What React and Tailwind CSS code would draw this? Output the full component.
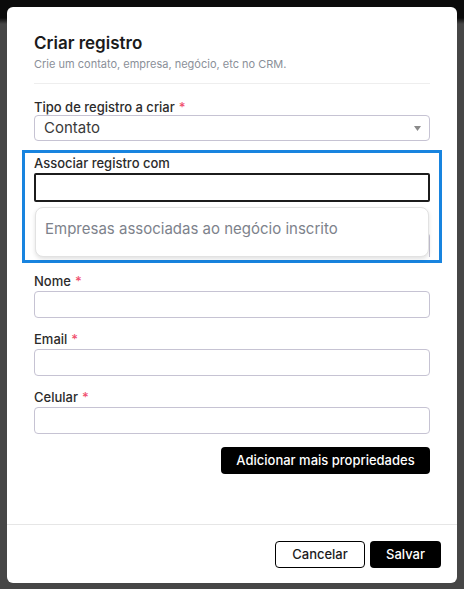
import React from 'react'

const FONT = { fontFamily: 'Inter, "Noto Sans", sans-serif' }

function Label({ children, required }) {
  return (
    <div className="text-[13px] leading-4 font-medium text-[#2b2b2b]">
      {children}
      {required && <span className="ml-[4px] text-[#f0506e]">*</span>}
    </div>
  )
}

function Field({ label, className = '' }) {
  return (
    <div className={className}>
      <Label required>{label}</Label>
      <div className="mt-[2px] h-[27px] rounded-[4px] border border-[#c6c3d3] bg-white" />
    </div>
  )
}

export default function App() {
  return (
    <div
      className="w-[464px] h-[589px] p-[7px] bg-[linear-gradient(to_bottom,#0b0b0b_18px,#464646_24px)]"
      style={FONT}
    >
      <div className="w-[450px] h-[576px] rounded-[6px] bg-white flex flex-col">
        {/* body */}
        <div className="px-[27px] pt-[25px] flex-1">
          <h2 className="text-[17px] leading-[22px] font-semibold text-[#1b1b1b]">Criar registro</h2>
          <p className="mt-[3px] text-[11px] leading-[14px] text-[#8b9099]">
            Crie um contato, empresa, negócio, etc no CRM.
          </p>
          <div className="mt-[12px] border-t border-[#eeeeee]" />

          <div className="mt-[15px]">
            <Label required>Tipo de registro a criar</Label>
            <div className="h-[26px] rounded-[4px] border border-[#c6c3d3] flex items-center justify-between pl-[9px] pr-[8px]">
              <span className="text-[15px] text-[#3a3a3a]">Contato</span>
              <svg width="7" height="5" viewBox="0 0 7 5">
                <path d="M0 0h7L3.5 5z" fill="#8a8a8a" />
              </svg>
            </div>
          </div>

          {/* highlighted association box */}
          <div className="mt-[9px] -mx-[12px] border-[3px] border-[#1884df] px-[9px] pt-[2px] pb-[3px]">
            <Label>Associar registro com</Label>
            <div className="mt-[2px] h-[29px] rounded-[2px] border-2 border-[#1c1c1c] bg-white" />
            <div className="relative mt-[5px] h-[50px]">
              <div className="absolute right-0 top-[26px] bottom-0 w-[6px] rounded-tr-[4px] border-t border-r border-[#c6c3d3]" />
              <div className="absolute left-[1px] right-[1px] top-0 bottom-0 rounded-[8px] border border-[#e2e2e2] bg-white shadow-[0_2px_4px_rgba(0,0,0,0.12)] flex items-center pl-[9px] pb-[5px]">
                <span className="text-[15px] text-[#7d828b]">Empresas associadas ao negócio inscrito</span>
              </div>
            </div>
          </div>

          <Field label="Nome" className="mt-[10px]" />
          <Field label="Email" className="mt-[13px]" />
          <Field label="Celular" className="mt-[13px]" />

          <div className="mt-[13px] flex justify-end">
            <button className="h-[27px] w-[209px] rounded-[4px] bg-black text-white text-[13px] font-medium">
              Adicionar mais propriedades
            </button>
          </div>
        </div>

        {/* footer */}
        <div className="border-t border-[#e6e6e6] h-[59px] flex justify-end items-start gap-[5px] pt-[16px] pr-[16px]">
          <button className="h-[27px] w-[90px] rounded-[4px] border border-black bg-white text-[13px] font-medium text-[#1b1b1b]">
            Cancelar
          </button>
          <button className="h-[27px] w-[71px] rounded-[4px] bg-black text-white text-[13px] font-medium">
            Salvar
          </button>
        </div>
      </div>
    </div>
  )
}
